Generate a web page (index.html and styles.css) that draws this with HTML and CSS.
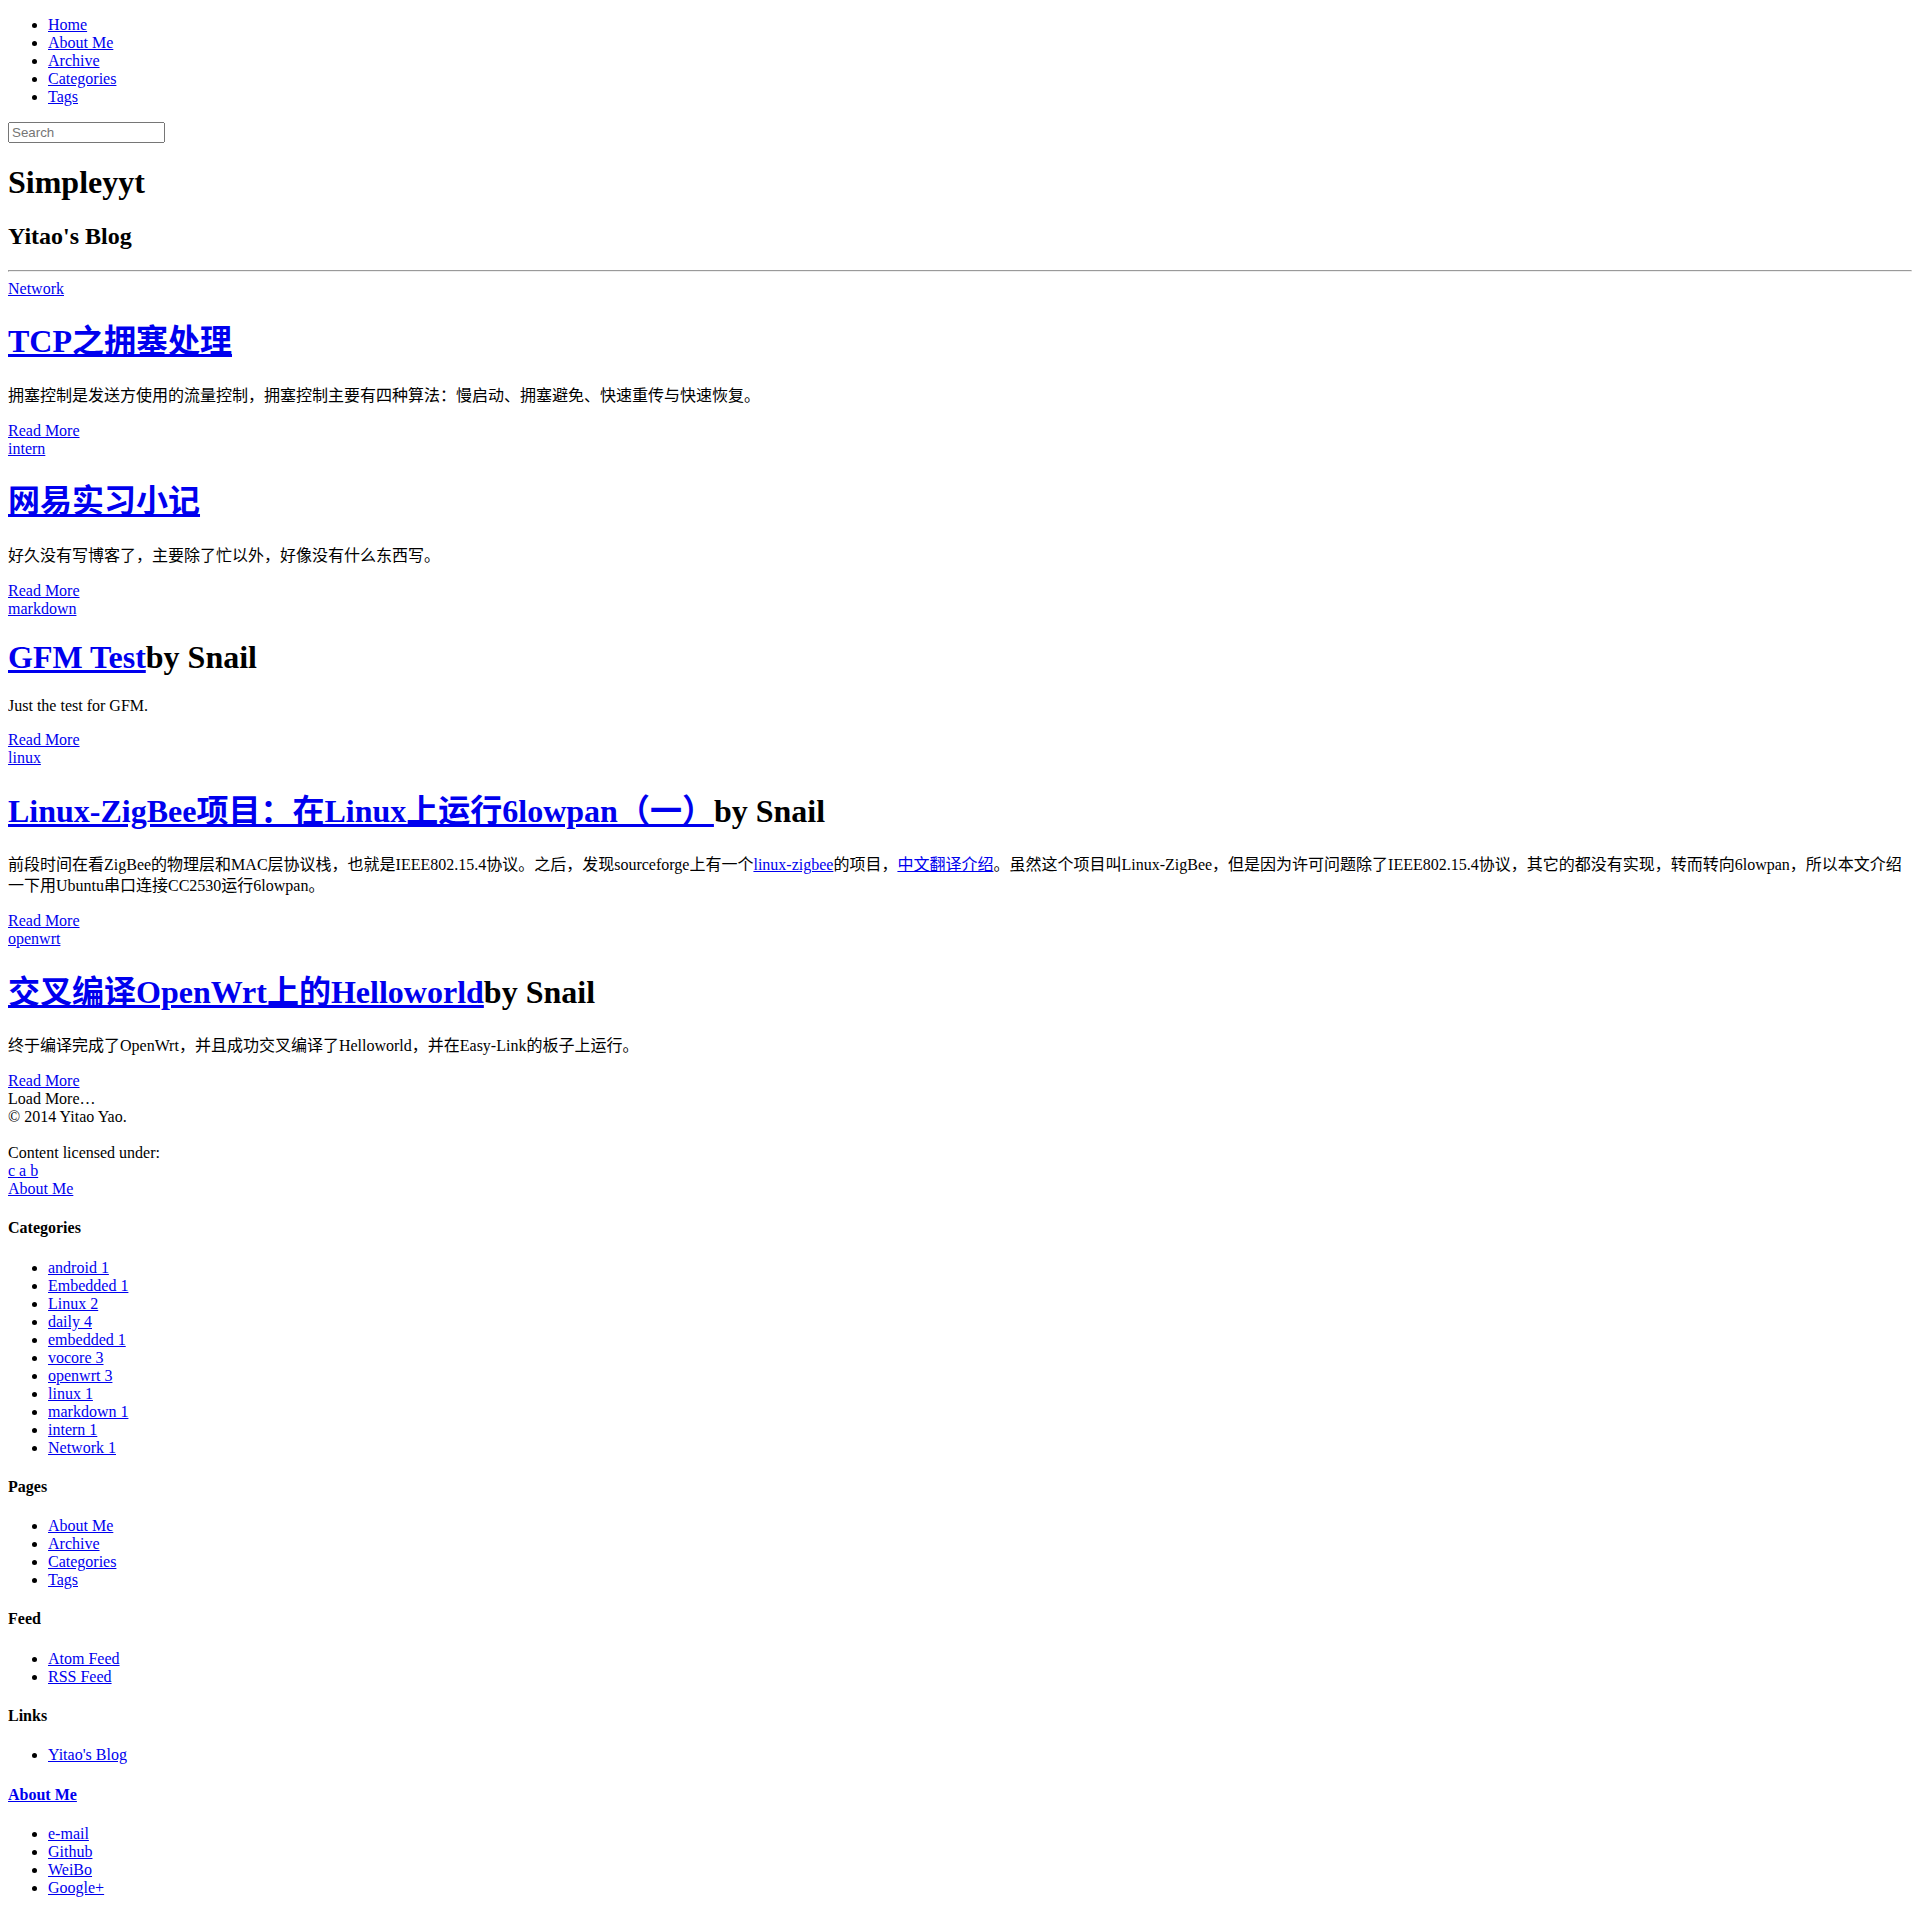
FILE: index.html
```html
<!DOCTYPE html>
<html lang="zh-CN">
<head>
  <meta charset="UTF-8" />
  <meta name="viewport" content="width=device-width, initial-scale=1.0" />
  <title>Simpleyyt</title>
  <link rel="stylesheet" href="styles.css">
</head>
<body>
  <ul class="nav">
    <li><a href="#">Home</a></li>
    <li><a href="#">About Me</a></li>
    <li><a href="#">Archive</a></li>
    <li><a href="#">Categories</a></li>
    <li><a href="#">Tags</a></li>
  </ul>

  <form class="search">
    <input type="text" placeholder="Search" />
  </form>

  <h1 class="site-title">Simpleyyt</h1>
  <h2 class="site-subtitle">Yitao's Blog</h2>
  <hr />

  <div class="posts">
    <div class="post">
      <div class="post-category"><a href="#">Network</a></div>
      <h1 class="post-title zh"><a href="#">TCP之拥塞处理</a></h1>
      <p class="post-excerpt zh">拥塞控制是发送方使用的流量控制，拥塞控制主要有四种算法：慢启动、拥塞避免、快速重传与快速恢复。</p>
      <div class="read-more"><a href="#">Read More</a></div>
    </div>

    <div class="post">
      <div class="post-category"><a href="#">intern</a></div>
      <h1 class="post-title zh"><a href="#">网易实习小记</a></h1>
      <p class="post-excerpt zh">好久没有写博客了，主要除了忙以外，好像没有什么东西写。</p>
      <div class="read-more"><a href="#">Read More</a></div>
    </div>

    <div class="post">
      <div class="post-category"><a href="#">markdown</a></div>
      <h1 class="post-title"><a href="#">GFM Test</a>by Snail</h1>
      <p class="post-excerpt">Just the test for GFM.</p>
      <div class="read-more"><a href="#">Read More</a></div>
    </div>

    <div class="post">
      <div class="post-category"><a href="#">linux</a></div>
      <h1 class="post-title zh"><a href="#">Linux-ZigBee项目：在Linux上运行6lowpan（一）</a>by Snail</h1>
      <p class="post-excerpt zh">前段时间在看ZigBee的物理层和MAC层协议栈，也就是IEEE802.15.4协议。之后，发现sourceforge上有一个<a href="#">linux-zigbee</a>的项目，<a href="#">中文翻译介绍</a>。虽然这个项目叫Linux-ZigBee，但是因为许可问题除了IEEE802.15.4协议，其它的都没有实现，转而转向6lowpan，所以本文介绍一下用Ubuntu串口连接CC2530运行6lowpan。</p>
      <div class="read-more"><a href="#">Read More</a></div>
    </div>

    <div class="post">
      <div class="post-category"><a href="#">openwrt</a></div>
      <h1 class="post-title zh"><a href="#">交叉编译OpenWrt上的Helloworld</a>by Snail</h1>
      <p class="post-excerpt zh">终于编译完成了OpenWrt，并且成功交叉编译了Helloworld，并在Easy-Link的板子上运行。</p>
      <div class="read-more"><a href="#">Read More</a></div>
    </div>

    <div class="load-more">Load More…</div>
  </div>

  <div class="footer">
    <div class="copyright">© 2014 Yitao Yao.</div>
    <p class="license">Content licensed under:</p>
    <div><a href="#">c a b</a></div>
    <div><a href="#">About Me</a></div>
  </div>

  <div class="sidebar">
    <h4>Categories</h4>
    <ul>
      <li><a href="#">android 1</a></li>
      <li><a href="#">Embedded 1</a></li>
      <li><a href="#">Linux 2</a></li>
      <li><a href="#">daily 4</a></li>
      <li><a href="#">embedded 1</a></li>
      <li><a href="#">vocore 3</a></li>
      <li><a href="#">openwrt 3</a></li>
      <li><a href="#">linux 1</a></li>
      <li><a href="#">markdown 1</a></li>
      <li><a href="#">intern 1</a></li>
      <li><a href="#">Network 1</a></li>
    </ul>

    <h4>Pages</h4>
    <ul>
      <li><a href="#">About Me</a></li>
      <li><a href="#">Archive</a></li>
      <li><a href="#">Categories</a></li>
      <li><a href="#">Tags</a></li>
    </ul>

    <h4>Feed</h4>
    <ul>
      <li><a href="#">Atom Feed</a></li>
      <li><a href="#">RSS Feed</a></li>
    </ul>

    <h4>Links</h4>
    <ul>
      <li><a href="#">Yitao's Blog</a></li>
    </ul>

    <h4><a href="#">About Me</a></h4>
    <ul>
      <li><a href="#">e-mail</a></li>
      <li><a href="#">Github</a></li>
      <li><a href="#">WeiBo</a></li>
      <li><a href="#">Google+</a></li>
    </ul>
  </div>
</body>
</html>
```

FILE: styles.css
```css
body {
  font-family: "Liberation Serif", "Noto Sans CJK SC", serif;
  color: #000;
  margin: 0 8px 8px;
}
.search input {
  box-sizing: border-box;
  width: 157px;
  height: 21px;
  font-family: "Liberation Sans", Arial, sans-serif;
  font-size: 13.333px;
}
.post-title.zh {
  line-height: 44px;
}
.post-excerpt.zh {
  line-height: 21px;
}
.license {
  margin: 18px 0 0;
}
```
